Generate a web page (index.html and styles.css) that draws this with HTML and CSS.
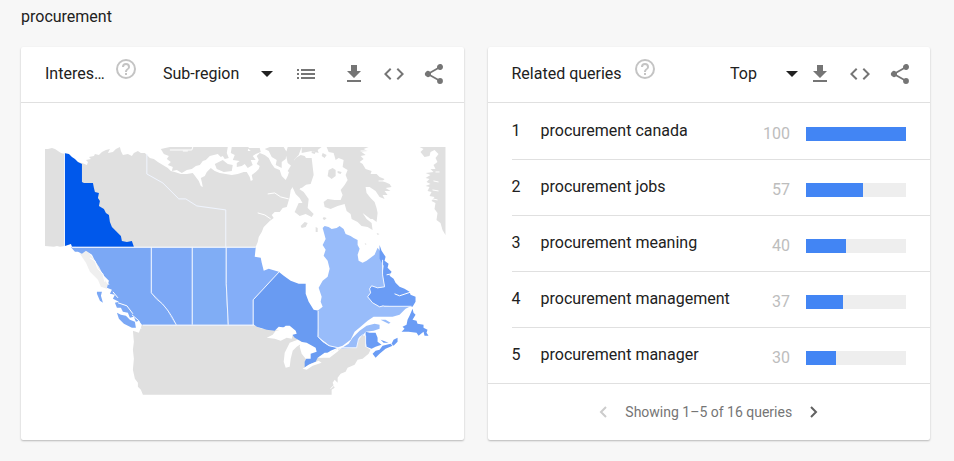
FILE: index.html
```html
<!DOCTYPE html>
<html lang="en">
<head>
<meta charset="utf-8">
<meta name="viewport" content="width=device-width, initial-scale=1">
<title>procurement</title>
<link rel="stylesheet" href="styles.css">
</head>
<body>
<svg class="defs" aria-hidden="true">
  <symbol id="help" viewBox="0 0 24 24"><path d="M11 18h2v-2h-2v2zm1-16a10 10 0 1 0 0 20 10 10 0 0 0 0-20zm0 18a8 8 0 1 1 0-16 8 8 0 0 1 0 16zm0-14a4 4 0 0 0-4 4h2a2 2 0 1 1 4 0c0 2-3 1.750-3 5h2c0-2.250 3-2.500 3-5a4 4 0 0 0-4-4z"/></symbol>
  <symbol id="download" viewBox="0 0 24 24"><path d="M19 9h-4V3H9v6H5l7 7 7-7zM5 18v2h14v-2z"/></symbol>
  <symbol id="code" viewBox="0 0 24 24"><path d="M9.400 16.600L4.800 12l4.600-4.600L8 6l-6 6 6 6 1.400-1.400zm5.200 0l4.600-4.600-4.600-4.600L16 6l6 6-6 6-1.400-1.400z"/></symbol>
  <symbol id="share" viewBox="0 0 24 24"><path d="M18 16.080c-.76 0-1.440.3-1.960.77L8.910 12.700c.05-.23.09-.46.09-.7s-.04-.47-.09-.7l7.050-4.110A3 3 0 1 0 15 5c0 .24.04.47.09.7L8.040 9.810A3 3 0 1 0 8.040 14.190l7.120 4.160c-.05.21-.08.43-.08.65A2.920 2.920 0 1 0 18 16.080z"/></symbol>
  <symbol id="list" viewBox="0 0 24 24"><path d="M3 13h2v-2H3v2zm0 4h2v-2H3v2zm0-8h2V7H3v2zm4 4h14v-2H7v2zm0 4h14v-2H7v2zM7 7v2h14V7H7z"/></symbol>
</svg>

<header class="term">procurement</header>

<main class="cards">
  <section class="card card-map">
    <div class="card-head">
      <h2>Interes…</h2>
      <button class="help" type="button" aria-label="Help"><svg><use href="#help"/></svg></button>
      <span class="picker picker-region">
        <select aria-label="Resolution"><option>Sub-region</option></select>
      </span>
      <div class="actions">
        <button class="view" type="button" aria-label="List"><svg><use href="#list"/></svg></button>
        <button type="button" aria-label="Download"><svg><use href="#download"/></svg></button>
        <button type="button" aria-label="Embed"><svg><use href="#code"/></svg></button>
        <button type="button" aria-label="Share"><svg><use href="#share"/></svg></button>
      </div>
    </div>
    <div class="map">
      <svg viewBox="45 147 401 248" role="img" aria-label="Map of Canada">
        <!-- neighbouring land and the northern territories -->
        <g class="land">
          <path d="M45 149L48 149 52 148 55 149 58 151 61 153 65 154 65 246 60 247 57 246 54 247 45 246z"/>
          <path d="M76 162L82 163 87 165 88 162 86 160 91 159 89 157 94 156 95 154 99 155 102 152 106 150 110 149 108 153 113 152 116 149 120 147 121 151 123 155 128 154 132 156 134 153 138 151 141 153 145 153 150 158 154 159 158 162 163 165 168 168 171 171 175 172 181 174 187 174 193 173 196 177 199 181 201 186 203 187 202 182 201 178 205 176 207 172 211 168 215 171 220 173 226 174 232 175 238 174 244 172 247 172 250 177 251 181 253 180 252 175 256 172 259 169 260 166 257 164 259 160 257 156 260 153 265 155 269 158 272 164 275 168 280 170 282 176 286 180 288 176 290 170 294 168 297 164 301 158 312 158 314 175 311 184 304 185 300 189 296 190 293 187 291 190 290 197 288 204 287 207 283 208 280 212 275 212 272 215 274 218 270 221 267 224 264 227 262 232 259 237 258 242 256 247 76 247z"/>
          <path d="M161 149L170 147 228 147 227 153 229 158 225 159 223 156 221 157 218 154 210 156 206 160 203 161 200 165 196 166 192 169 187 170 182 173 177 170 172 171 173 167 168 165 171 162 167 159 169 156 164 154z"/>
          <path d="M232 147h17l-1 4 5-1 3 4-3 2 3 4-5 0 2 5-5 3-3-4-3 2-5 1 0-4 3-2-7-1 2-5-4-2zM248 148h12l1 4-5 2-5-3zM215 164l8-4 5 4 5 1-1 6-8 1-7-3zM265 149l5-2h14l3 5-1 7-4 3 0 6-6-3 1-5-5-3-3-6zM288 147h14l-3 8-4 4-2 8-5-4-2-9zM302 147h20l-4 3 1 3-7-2-10 2z"/>
          <path d="M296 158L301 155 305 156 309 162 308 167 311 173 310 180 306 185 302 188 296 186 292 182 292 175 288 171 291 166zM290 181L298 188 304 192 309 199 308 208 304 205 300 198 296 194zM299 203L305 203 308 208 314 214 312 217 306 214 300 216 295 212zM301 226l4-4 3 1-2 4-4 1zM316 227l2 1 0 4-2 0z"/>
          <path d="M327 147L369 147 364 149 368 151 362 152 366 155 361 156 364 159 360 162 363 164 366 169 372 171 371 174 377 174 380 177 385 179 383 181 390 184 392 187 386 188 391 191 385 191 388 195 383 195 385 199 380 197 376 191 370 187 366 187 367 193 371 198 375 202 377 208 378 213 377 222 373 219 371 219 363 213 367 219 372 223 373 230 368 227 362 226 358 222 352 219 351 214 347 211 345 204 338 206 331 209 325 207 324 202 328 199 335 200 341 200 343 195 341 190 345 185 348 180 346 175 348 170 343 167 344 160 339 158 336 160 334 153 329 152z"/>
          <path d="M329 170l4-2 3 2 0 6-4 3-4-3zM338 171l4 1-1 2-3-1zM323 153l4 2-2 3-3-2zM312 151l4 1-1 2-3-1zM324 217l3 1-2 2-2-1zM365 243l2 1-1 1zM377 233l3 1-2 1z"/>
          <path d="M420 147L446 147 446 235 443 230 441 223 437 220 438 213 435 209 436 203 432 201 435 197 430 196 432 192 428 191 430 187 426 186 431 184 427 182 430 179 426 178 431 175 426 173 434 172 431 169 436 169 434 165 438 162 436 158 439 154 435 150 431 152 430 156 425 157 421 152 424 149z"/>
          <path d="M142 325L253 325 262 329 276 330 296 332 318 345 320 358 326 357 338 349 357 348 359 341 362 335 366 336 366 347 371 350 369 354 363 359 358 360 355 365 348 368 346 372 341 374 338 378 338 383 335 380 333 383 335 388 332 390 332 395 143 395 141 390 138 387 138 383 135 379 133 370 134 359 133 350 134 342 133 331 139 333z"/>
          <path class="panhandle" d="M80 254L86 249 92 257 98 265 102 274 108 285 107 289 101 287 98 280 90 272 86 263z"/>
        </g>
        <!-- provinces, shaded by interest -->
        <path class="yukon" d="M64 153L69 154 72 157 75 159 78 162 82 164 82 182 84 183 93 183 94 188 95 192 99 193 98 198 100 201 99 206 104 209 106 213 109 215 110 222 112 227 116 231 121 236 122 241 127 242 132 241 134 247 72 247 71 244 65 246z"/>
        <path class="west" d="M71 247.500L151 247.500 151 293 157 298 163 305 168 311 171 317 176 325 142 325 139 321 136 322 134 317 130 318 128 313 123 312 121 308 117 308 115 303 119 302 113 299 115 295 110 294 112 290 107 288 109 281 103 275 99 267 95 261 92 255 86 251 82 254 78 252 75 252z"/>
        <path class="west" d="M117 313l4 2 5 1 4 4 5 2 1 6-4 0-8-4-5-5zM97 292l5 0-1 4 2 7-3-2-3-7z"/>
        <path class="alberta" d="M151 247.500H192V325H176L171 317 168 311 163 305 157 298 151 293z"/>
        <path class="sask" d="M192 247.500h34V284l2 41h-36z"/>
        <path class="manitoba" d="M226 247.500H256L255 257 261 258 262 263 264 271 269 269 279 272 253 300V325H228L226 284z"/>
        <path class="ontario" d="M279 272L284 276 291 281 299 284 306 284 306 294 309 302 314 310 319 311 318 337 323 342 329 346 338 348 331 351 325 355 318 358 316 362 311 364 305 368 305 362 308 356 303 349 302 342 295 338 287 328 279 327 275 331 267 330 257 327 253 324V300z"/>
        <path class="quebec" d="M323 228L325 226 329 227 332 229 337 228 340 226 344 229 346 234 351 236 354 238 358 240 358 245 360 249 358 255 359 261 363 263 367 261 371 258 375 255 378 248 381 252 383 260 383 275 385 287 378 288 372 286 370 289 371 293 368 297 373 303 380 307 383 306 411 306.500 406 309 400 315 393 317 387 317 374 317 368 321 361 327 355 332 351 340 343 346 337 348 330 346 325 342 318 337 318 311 323 307 321 302 322 297 319 288 323 281 328 277 330 269 328 261 324 256 326 250 323 245 326 239z"/>
        <path class="quebec" d="M341 349L349 344 353 338 360 331 367 326 375 324 380 325 380 329 374 331 366 332 363 336 360 337 357 348zM381 320l5 0 5 3-2 1z"/>
        <path class="atlantic" d="M380 245L382 251 386 257 385 261 389 264 388 268 392 272 390 276 394 279 396 283 400 287 405 289 410 292 411 295 416 297 416 302 413 307 383 306 380 307 373 303 368 297 371 293 370 289 372 286 378 288 385 287 383 275 384 266 380 259z"/>
        <path class="atlantic" d="M413 309L414 313 416 315 413 320 417 321 418 324 424 325 424 328 428 330 427 333 429 336 425 336 424 332 419 336 417 333 409 332 402 332 405 329 403 327 407 325 408 320 410 316z"/>
        <path class="atlantic" d="M366 332l4 1 6 0 2 5 0 4 4 3-6 2-4 2-5-2-1-6zM373 354l3-3 4-1 3-4 8-2 2 2-7 3-6 5-4 4zM381 340l8 3-5 0zM392 344l2-4 4-2 0 4-4 4z"/>
        <!-- provincial and territorial borders -->
        <g class="borders">
          <path d="M64.500 153v93M72 247.500h184M143 325.500h111M151.500 247v46l5 6 6 5 5 6 4 6 5 9M192.500 247v78M226.500 247v37l2 41M253.500 325v-25l26-28M147 154v20l16 9 16 16h7l11 7 29 4v37M318.500 311v26l5 5 6 4 9 2M384 306.500h28M383 260L383 275 385 287 378 288 372 286 370 289 371 293 368 297 373 303 380 307 384 306M357 348H342L329 357M357 348l2-9 4-4 3 1 0 11"/>
        </g>
        <!-- inlets, straits and lakes -->
        <g class="water">
          <path d="M267 338l6-3 3-4 5-1 5-4 4 0 6 5 1 3-4 1-1 4-5-1-6 3-6-2zM290 343l8-3 5 3-6 4-4 4-2 8-1 8-4 1-2-6 1-9zM301 342l6 1 9 5 1 4-6 2 0 5-5 0-4-5-2-7zM303 369l6-4 10-4 3 2-9 3-6 4zM318 358l7-5 7 0 6-4 1 2-9 7z"/>
          <path class="fjords" d="M268 194l7-1 6 4 8 2M258 213l7 2 6 4M170 150h22l1-3M183 151l5 0M382 247l4 8M412 292l-12 4-5-2M392 274l-5 1M90 258l5 3 3 8 5 5 2 8M132 315l7 6 2 8M118 303l9 3 6 8M113 292l5 6M105 279l4 6M368 151l-7 0M367 167l8 3M379 181l8 0M434 181l5 1M433 190l6 1M433 199l5 1M436 172l4 0M331 389l5-5"/>
        </g>
      </svg>
    </div>
  </section>

  <section class="card">
    <div class="card-head">
      <h2>Related queries</h2>
      <button class="help" type="button" aria-label="Help"><svg><use href="#help"/></svg></button>
      <div class="actions">
        <span class="picker picker-sort">
          <select aria-label="Sort"><option>Top</option></select>
        </span>
        <button type="button" aria-label="Download"><svg><use href="#download"/></svg></button>
        <button type="button" aria-label="Embed"><svg><use href="#code"/></svg></button>
        <button type="button" aria-label="Share"><svg><use href="#share"/></svg></button>
      </div>
    </div>
    <ol class="queries">
      <li><span>1</span><a href="#">procurement canada</a><span class="value">100</span><span class="bar"><i style="width:100%"></i></span></li>
      <li><span>2</span><a href="#">procurement jobs</a><span class="value">57</span><span class="bar"><i style="width:57%"></i></span></li>
      <li><span>3</span><a href="#">procurement meaning</a><span class="value">40</span><span class="bar"><i style="width:40%"></i></span></li>
      <li><span>4</span><a href="#">procurement management</a><span class="value">37</span><span class="bar"><i style="width:37%"></i></span></li>
      <li><span>5</span><a href="#">procurement manager</a><span class="value">30</span><span class="bar"><i style="width:30%"></i></span></li>
    </ol>
    <nav class="pager">
      <button type="button" aria-label="Previous" disabled><svg viewBox="0 0 20 20"><path d="M13 5l-5 5 5 5"/></svg></button>
      <span>Showing 1–5 of 16 queries</span>
      <button type="button" aria-label="Next"><svg viewBox="0 0 20 20"><path d="M7 5l5 5-5 5"/></svg></button>
    </nav>
  </section>
</main>
</body>
</html>
```
FILE: styles.css
```css
* { box-sizing: border-box; }

body {
  margin: 0;
  padding: 5px 24px 20px 21px;
  background: #f7f7f7;
  color: #212121;
  font: 16px/24px Roboto, sans-serif;
}

.defs { display: none; }

button {
  display: flex;
  align-items: center;
  justify-content: center;
  padding: 0;
  border: 0;
  background: none;
  color: inherit;
  font: inherit;
}

.term { margin-bottom: 18px; }

.cards {
  display: grid;
  grid-template-columns: 1fr 1fr;
  gap: 24px;
}

.card {
  background: #fff;
  border-radius: 2px;
  box-shadow: 0 1px 2px rgba(0, 0, 0, .26);
}

.card-head {
  display: flex;
  align-items: center;
  height: 56px;
  padding: 0 10px 1px 24px;
  border-bottom: 1px solid #e0e0e0;
}

.card-head h2 {
  margin: 0;
  font-size: 16px;
  font-weight: 400;
  white-space: nowrap;
}

.card-map h2 { width: 58px; }

.card-head svg {
  width: 24px;
  height: 24px;
  fill: #757575;
}

.card-head .help {
  align-self: flex-start;
  margin: 10px 0 0 11px;
}

.card-head .help svg { fill: #c4c4c4; }

.actions {
  display: flex;
  align-items: center;
  margin-left: auto;
}

.actions button {
  width: 40px;
  height: 40px;
}

.actions .view { margin-right: 8px; }

.picker {
  position: relative;
  display: flex;
}

.picker::after {
  content: "";
  position: absolute;
  right: 0;
  top: 9px;
  border: 6px solid transparent;
  border-top-color: #212121;
  border-bottom: 0;
  pointer-events: none;
}

.picker select {
  width: 100%;
  height: 24px;
  padding: 0;
  border: 0;
  appearance: none;
  background: none;
  color: inherit;
  font: inherit;
}

.picker-region {
  width: 110px;
  margin-left: 25px;
}

.picker-sort {
  width: 68px;
  margin-right: 2px;
}

.map { padding: 44px 18px 44px 24px; }

.map svg {
  display: block;
  width: 100%;
}

.land { fill: #e0e0e0; }
.panhandle { opacity: .5; }
.yukon { fill: #0058eb; }
.west { fill: #7ba8f5; }
.alberta { fill: #7ca8f6; }
.sask { fill: #80adf5; }
.manitoba { fill: #84aef8; }
.ontario { fill: #699bf2; }
.quebec { fill: #98bcfa; }
.atlantic { fill: #6a9cf5; }
.borders { fill: none; stroke: #f0f5ff; }
.water { fill: #fff; }
.fjords { fill: none; stroke: #fff; }

.queries {
  margin: 0;
  padding: 1px 0 0 24px;
  list-style: none;
}

.queries li {
  display: grid;
  grid-template-columns: 29px 1fr auto 100px;
  align-items: center;
  height: 56px;
  padding: 0 24px 2px 0;
  border-bottom: 1px solid #e0e0e0;
}

.queries li:last-child {
  margin-left: -24px;
  padding-left: 24px;
}

.queries a {
  color: inherit;
  text-decoration: none;
}

.value {
  padding: 7px 16px 0 0;
  color: #bdbdbd;
}

.bar {
  height: 14px;
  margin-top: 6px;
  background: #eee;
}

.bar i {
  display: block;
  height: 100%;
  background: #4285f4;
}

.pager {
  display: flex;
  align-items: center;
  justify-content: center;
  gap: 12px;
  height: 56px;
  color: #757575;
  font-size: 14px;
}

.pager svg {
  width: 20px;
  height: 20px;
  fill: none;
  stroke: #616161;
  stroke-width: 2;
}

.pager button:disabled svg { stroke: #ccc; }
```
